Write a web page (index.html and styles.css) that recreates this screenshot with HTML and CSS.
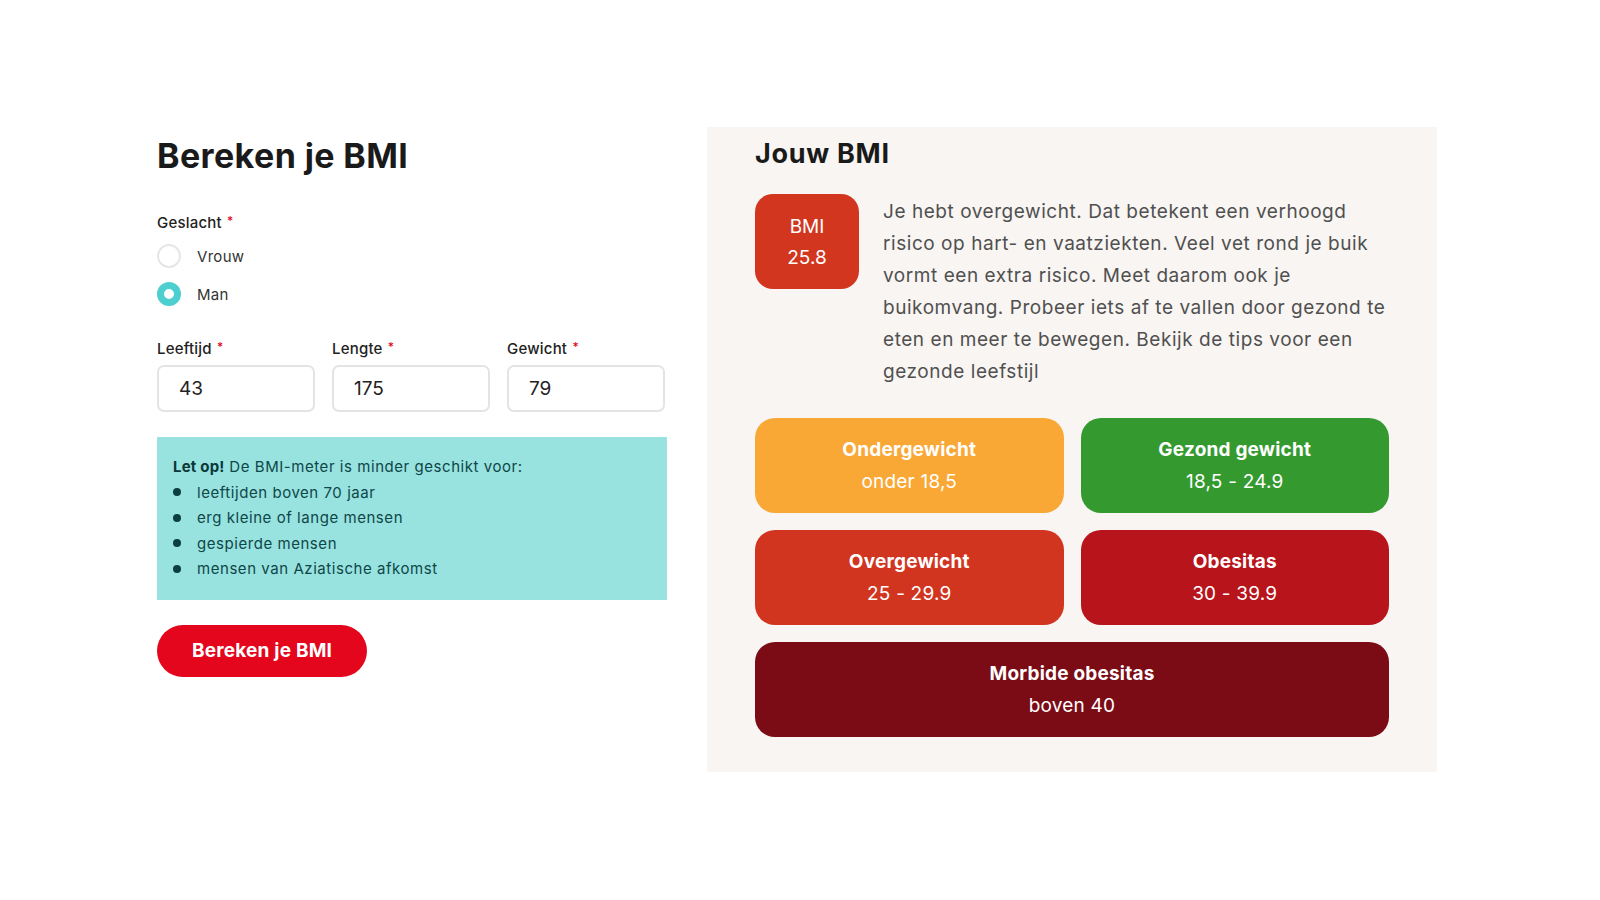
FILE: index.html
```html
<!DOCTYPE html>
<html lang="nl">
<head>
<meta charset="utf-8">
<title>Bereken je BMI</title>
<link rel="stylesheet" href="styles.css">
</head>
<body>
<main class="page">
  <section class="calc">
    <h1 class="calc-title">Bereken je BMI</h1>
    <div class="field-label">Geslacht <span class="req">*</span></div>
    <div class="radios">
      <label class="radio"><span class="radio-dot"></span><span class="radio-text">Vrouw</span></label>
      <label class="radio"><span class="radio-dot radio-dot--on"></span><span class="radio-text">Man</span></label>
    </div>
    <div class="fields">
      <div class="field">
        <div class="field-label">Leeftijd <span class="req">*</span></div>
        <div class="input">43</div>
      </div>
      <div class="field">
        <div class="field-label">Lengte <span class="req">*</span></div>
        <div class="input">175</div>
      </div>
      <div class="field">
        <div class="field-label">Gewicht <span class="req">*</span></div>
        <div class="input">79</div>
      </div>
    </div>
    <div class="note">
      <p class="note-intro"><strong>Let op!</strong> De BMI-meter is minder geschikt voor:</p>
      <ul class="note-list">
        <li>leeftijden boven 70 jaar</li>
        <li>erg kleine of lange mensen</li>
        <li>gespierde mensen</li>
        <li>mensen van Aziatische afkomst</li>
      </ul>
    </div>
    <button class="btn">Bereken je BMI</button>
  </section>

  <section class="result">
    <h2 class="result-title">Jouw BMI</h2>
    <div class="result-top">
      <div class="badge"><span>BMI</span><span>25.8</span></div>
      <p class="result-text">Je hebt overgewicht. Dat betekent een verhoogd risico op hart- en vaatziekten. Veel vet rond je buik vormt een extra risico. Meet daarom ook je buikomvang. Probeer iets af te vallen door gezond te eten en meer te bewegen. Bekijk de tips voor een gezonde leefstijl</p>
    </div>
    <div class="cats">
      <div class="cat cat--under"><strong>Ondergewicht</strong><span>onder 18,5</span></div>
      <div class="cat cat--healthy"><strong>Gezond gewicht</strong><span>18,5 - 24.9</span></div>
      <div class="cat cat--over"><strong>Overgewicht</strong><span>25 - 29.9</span></div>
      <div class="cat cat--obese"><strong>Obesitas</strong><span>30 - 39.9</span></div>
      <div class="cat cat--morbid"><strong>Morbide obesitas</strong><span>boven 40</span></div>
    </div>
  </section>
</main>
</body>
</html>
```
FILE: styles.css
```css
* { box-sizing: border-box; }
html, body { margin: 0; padding: 0; background: #fff; }
body {
  font-family: Inter, "Noto Sans", sans-serif;
  color: #1d1d1d;
}
.page {
  display: flex;
  align-items: flex-start;
  gap: 40px;
  padding: 127px 0 0 157px;
}
.calc {
  width: 510px;
  padding-top: 9px;
}
.calc-title {
  margin: 0;
  font-size: 34px;
  line-height: 40px;
  font-weight: 700;
  color: #1a1a1a;
  letter-spacing: 0.4px;
}
.field-label {
  font-size: 15px;
  line-height: 20px;
  font-weight: 500;
  color: #222;
  letter-spacing: 0.2px;
}
.req {
  color: #e3061c;
  font-size: 12px;
  vertical-align: 3px;
  margin-left: 1px;
}
.calc-title + .field-label { margin-top: 35px; }
.radios {
  display: flex;
  flex-direction: column;
  gap: 14px;
  margin-top: 11px;
}
.radio {
  display: flex;
  align-items: center;
  gap: 16px;
  height: 24px;
  font-size: 15px;
  color: #333;
  letter-spacing: 0.3px;
}
.radio-dot {
  width: 24px;
  height: 24px;
  border-radius: 50%;
  border: 2px solid #e6e6e6;
  background: #fff;
}
.radio-dot--on { border: 7px solid #4ccfce; }
.fields {
  display: grid;
  grid-template-columns: repeat(3, 1fr);
  gap: 17px;
  margin-top: 31px;
  padding-right: 2px;
}
.field .field-label { margin-bottom: 6px; }
.input {
  height: 47px;
  border: 2px solid #e4e4e4;
  border-radius: 7px;
  padding: 0 20px;
  display: flex;
  align-items: center;
  font-size: 19px;
  color: #222;
}
.note {
  margin-top: 25px;
  background: #98e2e0;
  padding: 17px 16px 18px;
  color: #0e4747;
  font-size: 15px;
  line-height: 25.5px;
  letter-spacing: 0.55px;
}
.note-intro { margin: 0; }
.note-intro strong { color: #0a3838; font-weight: 700; letter-spacing: 0.2px; }
.note-list {
  margin: 0;
  padding: 0;
  list-style: none;
}
.note-list li {
  display: flex;
  align-items: center;
  gap: 16px;
}
.note-list li::before {
  content: "";
  width: 8px;
  height: 8px;
  border-radius: 50%;
  background: #0b3f3f;
}
.btn {
  display: block;
  margin-top: 25px;
  height: 52px;
  padding: 0 35px;
  border: 0;
  border-radius: 26px;
  background: #e3061c;
  color: #fff;
  font-family: inherit;
  font-size: 19px;
  font-weight: 700;
  letter-spacing: 0.2px;
}
.result {
  width: 730px;
  background: #f8f5f2;
  padding: 10px 48px 35px;
}
.result-title {
  margin: 0;
  font-size: 27px;
  line-height: 34px;
  font-weight: 700;
  color: #1a1a1a;
  letter-spacing: 0.7px;
}
.result-top {
  display: flex;
  align-items: flex-start;
  gap: 24px;
  margin-top: 23px;
}
.badge {
  flex: none;
  width: 104px;
  height: 95px;
  border-radius: 18px;
  background: #d2361f;
  color: #fff;
  display: flex;
  flex-direction: column;
  align-items: center;
  justify-content: center;
  font-size: 19px;
  line-height: 31px;
}
.result-text {
  margin: 0;
  padding-top: 2px;
  max-width: 506px;
  font-size: 19px;
  line-height: 32px;
  color: #505050;
  letter-spacing: 0.55px;
}
.cats {
  display: grid;
  grid-template-columns: 1fr 1fr;
  gap: 17px;
  margin-top: 30px;
}
.cat {
  height: 95px;
  border-radius: 20px;
  color: #fff;
  display: flex;
  flex-direction: column;
  align-items: center;
  justify-content: center;
  font-size: 19px;
  line-height: 32px;
  letter-spacing: 0.2px;
}
.cat strong { font-weight: 700; }
.cat--under { background: #f9a836; }
.cat--healthy { background: #349a2f; }
.cat--over { background: #d1351f; }
.cat--obese { background: #b8141b; }
.cat--morbid { background: #7b0c16; grid-column: 1 / -1; }
```
